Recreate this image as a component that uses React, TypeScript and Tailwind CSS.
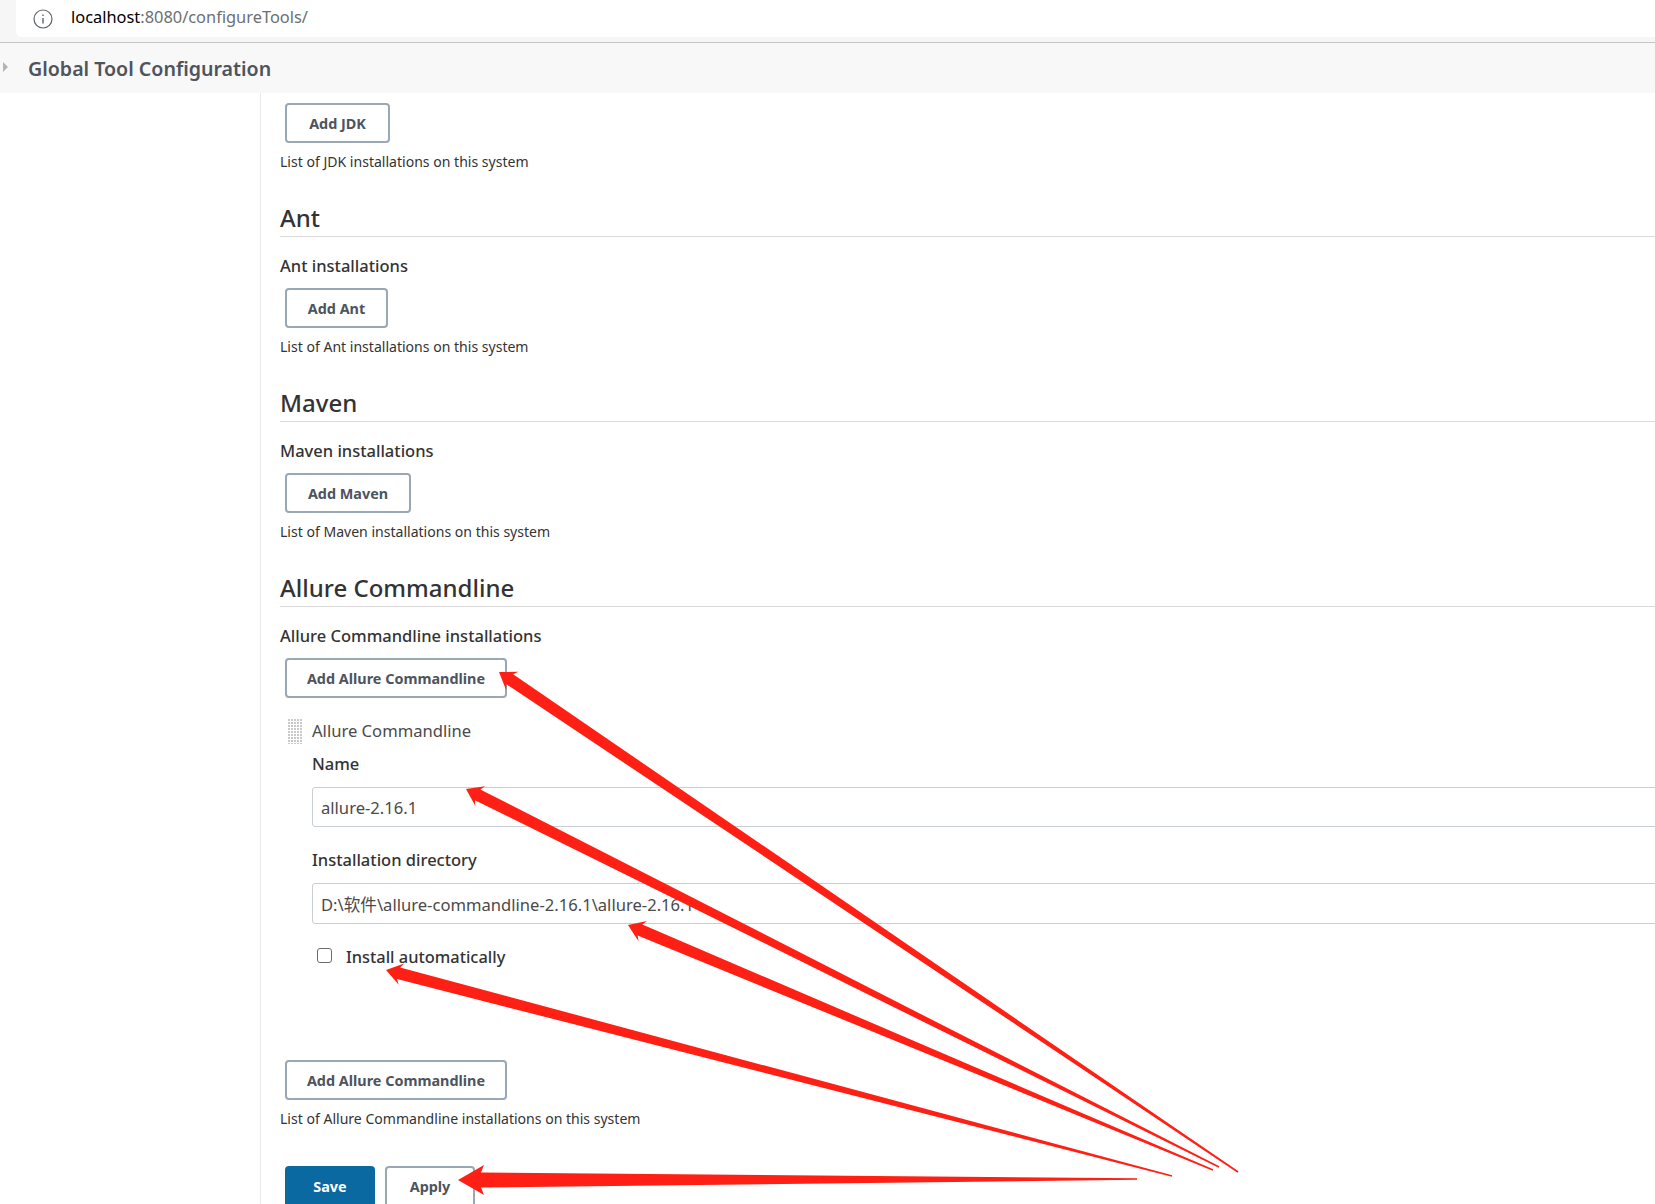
const arrows = [
  { tip: [499, 672], tail: [1238, 1172], len: 16, wing: 11, shaft: 6 },
  { tip: [466, 789], tail: [1219, 1167], len: 16, wing: 11, shaft: 6 },
  { tip: [628, 925], tail: [1213, 1170], len: 16, wing: 11, shaft: 6 },
  { tip: [386, 970], tail: [1172, 1176], len: 16, wing: 11, shaft: 6 },
  { tip: [458, 1180], tail: [1137, 1179], len: 26, wing: 15, shaft: 7.5 },
];

function arrowPoints(a: (typeof arrows)[number]) {
  const dx = a.tail[0] - a.tip[0];
  const dy = a.tail[1] - a.tip[1];
  const l = Math.hypot(dx, dy);
  const ux = dx / l;
  const uy = dy / l;
  const at = (along: number, side: number) =>
    `${a.tip[0] + ux * along - uy * side},${a.tip[1] + uy * along + ux * side}`;
  return [
    at(0, 0),
    at(a.len, a.wing),
    at(a.len - 3, a.shaft),
    at(l, 0.8),
    at(l, -0.8),
    at(a.len - 3, -a.shaft),
    at(a.len, -a.wing),
  ].join(" ");
}

function OutlineButton({ label, width }: { label: string; width: string }) {
  return (
    <button
      className={`ml-[5px] block h-[40px] ${width} rounded-[4px] border-2 border-[#9aa7b4] bg-white pt-[2px] text-center text-[14.4px] font-bold text-[#4d545d]`}
    >
      {label}
    </button>
  );
}

function Help({ text }: { text: string }) {
  return <p className="mt-2 h-[20px] text-[14.05px] leading-[22px] text-[#333]">{text}</p>;
}

function Section({ title, children }: { title: string; children: React.ReactNode }) {
  return (
    <>
      <h2 className="mt-[30px] -mr-4 h-[36px] border-b border-[#d9d9d9] text-[24px] leading-[34px] font-medium text-[#333]">
        {title}
      </h2>
      {children}
    </>
  );
}

function Label({ text, className }: { text: string; className: string }) {
  return <div className={`h-[24px] text-[16.5px] leading-[24px] font-medium text-[#333] ${className}`}>{text}</div>;
}

function TextField({ value, className }: { value: string; className: string }) {
  return (
    <input
      readOnly
      value={value}
      className={`block w-[calc(100%+16px)] rounded-[3px] border border-[#c9ced3] bg-white px-[8px] text-[16.6px] text-[#4a4a4a] ${className}`}
    />
  );
}

export default function App() {
  return (
    <div
      className="relative h-[1204px] w-[1655px] overflow-hidden bg-white"
      style={{ fontFamily: '"Noto Sans", "Noto Sans CJK SC", sans-serif' }}
    >
      <div className="h-[43px] border-b border-[#c6c6c6] bg-[#f6f6f6] pl-[16px]">
        <div className="flex h-[37px] items-center rounded-bl-[6px] bg-white pl-[17px]">
          <svg width="20" height="20" viewBox="0 0 20 20" fill="none" stroke="#5f6368" strokeWidth="1.2">
            <circle cx="10" cy="10" r="9" />
            <path d="M10 9v5.5" strokeWidth="1.4" />
            <path d="M10 5.5v1.6" strokeWidth="1.4" />
          </svg>
          <span className="ml-[18px] -mt-[2px] text-[16.4px] text-[#6b6f73]">
            <span className="text-black">localhost</span>:8080/configureTools/
          </span>
        </div>
      </div>

      <div className="flex h-[50px] items-center bg-[#f8f8f8]">
        <svg className="ml-[3px] -mt-[2px]" width="5" height="10" viewBox="0 0 5 10">
          <path d="M0 0l5 5-5 5z" fill="#b4b4b4" />
        </svg>
        <h1 className="ml-[20px] mt-[2px] text-[19.6px] font-semibold text-[#4d545d]">Global Tool Configuration</h1>
      </div>

      <div className="flex">
        <aside className="h-[1111px] w-[261px] shrink-0 border-r border-[#eaeaea]" />
        <main className="flex-1 overflow-hidden pl-[19px] pt-[10px]">
          <OutlineButton label="Add JDK" width="w-[105px]" />
          <Help text="List of JDK installations on this system" />

          <Section title="Ant">
            <Label text="Ant installations" className="mt-[17px]" />
            <div className="mt-[10px]">
              <OutlineButton label="Add Ant" width="w-[103px]" />
            </div>
            <Help text="List of Ant installations on this system" />
          </Section>

          <Section title="Maven">
            <Label text="Maven installations" className="mt-[17px]" />
            <div className="mt-[10px]">
              <OutlineButton label="Add Maven" width="w-[126px]" />
            </div>
            <Help text="List of Maven installations on this system" />
          </Section>

          <Section title="Allure Commandline">
            <Label text="Allure Commandline installations" className="mt-[17px]" />
            <div className="mt-[10px]">
              <OutlineButton label="Add Allure Commandline" width="w-[222px]" />
            </div>

            <div className="mt-[21px] flex h-[24px] items-center pl-[8px] text-[16.6px] text-[#4a4a4a]">
              <svg width="15" height="25" className="shrink-0">
                <defs>
                  <pattern id="grip" width="3" height="3" patternUnits="userSpaceOnUse">
                    <rect width="2" height="2" fill="#c9c9c9" />
                  </pattern>
                </defs>
                <rect width="15" height="25" fill="url(#grip)" />
              </svg>
              <span className="ml-[9px]">Allure Commandline</span>
            </div>

            <div className="pl-[32px]">
              <Label text="Name" className="mt-[9px]" />
              <TextField value="allure-2.16.1" className="mt-[11px] h-[40px]" />
              <Label text="Installation directory" className="mt-[21px]" />
              <TextField value="D:\软件\allure-commandline-2.16.1\allure-2.16.1" className="mt-[11px] h-[41px]" />
              <div className="mt-[21px] flex h-[24px] items-center">
                <span className="ml-[5px] -mt-[3px] block h-[15px] w-[15px] rounded-[3px] border-[1.5px] border-[#6b6b6b] bg-white" />
                <span className="ml-[14px] mt-[1px] text-[16.4px] font-medium text-[#333]">Install automatically</span>
              </div>
            </div>

            <div className="mt-[91px]">
              <OutlineButton label="Add Allure Commandline" width="w-[222px]" />
            </div>
            <Help text="List of Allure Commandline installations on this system" />
          </Section>

          <div className="mt-[38px] ml-[5px] flex gap-[10px]">
            <button className="h-[45px] w-[90px] rounded-[4px] bg-[#0b69a1] pb-[4px] text-[14.4px] font-bold text-white">Save</button>
            <button className="h-[45px] w-[90px] rounded-[4px] border-2 border-[#9aa7b4] bg-white pb-[4px] text-[14.4px] font-bold text-[#4d545d]">
              Apply
            </button>
          </div>
        </main>
      </div>

      <svg className="pointer-events-none absolute top-0 left-0" width="1655" height="1204">
        {arrows.map((a) => (
          <polygon key={a.tip.join()} points={arrowPoints(a)} fill="#ff2015" />
        ))}
      </svg>
    </div>
  );
}
